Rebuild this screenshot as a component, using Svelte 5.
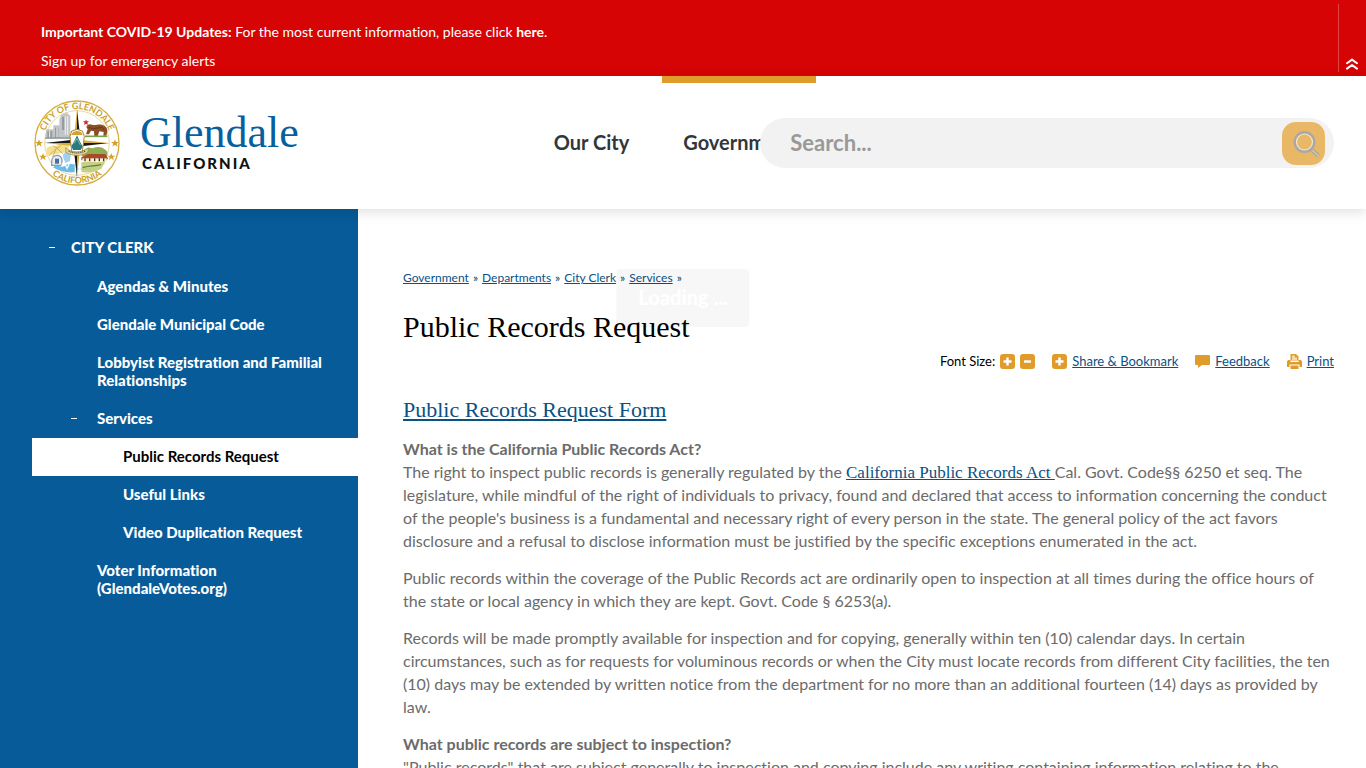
<script>
  const crumbs = ['Government', 'Departments', 'City Clerk', 'Services'];
  const sideItems = [
    { label: 'CITY CLERK', level: 0, open: true },
    { label: 'Agendas & Minutes', level: 1 },
    { label: 'Glendale Municipal Code', level: 1 },
    { label: 'Lobbyist Registration and Familial Relationships', level: 1 },
    { label: 'Services', level: 1, open: true },
    { label: 'Public Records Request', level: 2, active: true },
    { label: 'Useful Links', level: 2 },
    { label: 'Video Duplication Request', level: 2 },
    { label: 'Voter Information (GlendaleVotes.org)', level: 1 }
  ];
  let query = $state('');
</script>

{#snippet sign(minus)}
  <svg class="sign" viewBox="0 0 15 15" aria-hidden="true">
    <rect width="15" height="15" rx="3" fill="#df9c2b" />
    <path d={minus ? 'M4 7.5h7' : 'M3.5 7.5h8M7.5 3.5v8'} stroke="#fff" stroke-width="2.4" />
  </svg>
{/snippet}

<div class="page">
  <aside class="alert">
    <div class="alert-text">
      <p><strong>Important COVID-19 Updates:</strong> For the most current information, please click <a href="#covid"><strong>here</strong></a>.</p>
      <p><a href="#alerts">Sign up for emergency alerts</a></p>
    </div>
    <button class="collapse" aria-label="Collapse alert">
      <svg viewBox="0 0 12 12" aria-hidden="true"><path d="M1 5.2 6 1.6l5 3.6M1 10.6 6 7l5 3.6" fill="none" stroke="#fff" stroke-width="2" stroke-linecap="round" stroke-linejoin="round" /></svg>
    </button>
  </aside>

  <header>
    <a class="brand" href="#home" aria-label="Glendale California">
      <svg class="seal" viewBox="0 0 258 258" aria-hidden="true">
        <defs>
          <path id="arc-top" d="M27 129a102 102 0 0 1 204 0" />
          <path id="arc-bottom" d="M8 129a121 121 0 0 0 242 0" />
        </defs>
        <circle cx="129" cy="129" r="126" fill="#fff" stroke="#d6ae3c" stroke-width="4" />
        <circle cx="129" cy="129" r="97" fill="none" stroke="#dfc165" stroke-width="2" />
        <g class="seal-text">
          <text><textPath href="#arc-top" startOffset="50%" text-anchor="middle">CITY OF GLENDALE</textPath></text>
          <text><textPath href="#arc-bottom" startOffset="50%" text-anchor="middle">CALIFORNIA</textPath></text>
        </g>
        <g fill="#d1a02a">
          <path id="st" d="m15 118 3 8h9l-7 5 3 9-8-6-8 6 3-9-7-5h9z" />
          <use href="#st" x="12" y="41" /><use href="#st" x="228" /><use href="#st" x="217" y="41" />
        </g>
        <path d="M36 88h22V76h18V56l8-14 14-4 11 9v55l9 14H34z" fill="#c3c6c8" />
        <path d="M40 93h15v19H40zM63 83h10v30H63zM84 50h7v40h-7z" fill="#969b9e" />
        <path d="M47 93v19M69 83v30M94 49v55M101 49v55" stroke="#f1f1f1" stroke-width="3" />
        <path d="M34 114h79" stroke="#777e80" stroke-width="3" />
        <path d="m156 58 2 6h7l-5 4 2 7-6-4-6 4 2-7-5-4h7z" fill="#d8232f" />
        <path d="M157 81c4-10 12-9 17-7 11 4 18-3 29 0 13 3 17 10 17 20l-3 13h-9l1-11-13-2-5 15h-10l-1-15-9-2-6 11h-9l5-15z" fill="#8c4f25" />
        <path d="m164 82 14 4 26-4 8 9" fill="none" stroke="#643819" stroke-width="3" />
        <path d="M153 109h67" stroke="#77a343" stroke-width="5" />
        <path d="M38 145c14-13 22 1 31-9s15 1 36-5l-2 24-29 6-37 4z" fill="#f4df8f" />
        <path d="M44 168 68 144M56 170l12-26M69 144l17 17M69 144l-13-7M69 144l12-6" stroke="#d4b355" stroke-width="3" />
        <path d="M53 185c0-24 31-25 31-3v14H53z" fill="#e8edf0" stroke="#879dac" stroke-width="4" />
        <path d="M63 176h12v15H63z" fill="#466ea0" />
        <path d="m86 165 12-13 13 7-3 24-16 7z" fill="#9ed1ed" />
        <path d="M57 202c16-12 25 5 39-6s18 1 26-5v26c-24 2-47-3-65-15z" fill="#69bce5" />
        <path d="m83 199 7-15 9 22 8-18" fill="none" stroke="#fff" stroke-width="4" />
        <path d="M145 154c10-9 18-14 31-9 17-7 30-4 44 10v14h-77z" fill="#8fae51" />
        <path d="m142 172 20-10h52l8 13-4 6h-76z" fill="#a64a27" />
        <path d="M145 175h73v8h-73z" fill="#faf0d6" />
        <path d="M153 175v9m14-9v9m15-9v9m14-9v9m13-9v9" stroke="#4d2920" stroke-width="4" />
        <path d="M142 187c25-6 44 2 73-3l-13 22c-23 13-42 13-60 10z" fill="#c9cf85" />
        <path d="M146 203c20-8 36-3 55-9" stroke="#52833d" stroke-width="4" fill="none" />
        <path d="m129 28 10 86-10 15zM129 234l-10-90 10-15zM32 129l85-10 12 10zM226 129l-85 10-12-10z" fill="#171713" />
        <path d="m129 28-9 86 9 15zM129 234l9-90-9-15zM32 129l85 9 12-9zM226 129l-85-9-12 9z" fill="#d3ad3f" />
        <path d="m108 109 5-16 16-5 16 5 6 16-6 45-16 9-16-9z" fill="#fff" stroke="#ab852c" stroke-width="3" />
        <path d="m112 105 5-9 12-4 12 4 5 9z" fill="#d0a332" />
        <path d="m112 139 11-20 6-13 8 17 9 17-6 10h-23z" fill="#267b80" />
        <path d="m120 131 9-16 10 20" stroke="#81b9a6" fill="none" stroke-width="3" />
        <path d="M95 143c13 16 52 17 68 0l-2 14c-20 13-46 12-65 0z" fill="#e9d7a1" stroke="#9b833f" stroke-width="2" />
        <path d="M104 153c16 8 34 8 50 0" stroke="#383525" stroke-width="4" stroke-dasharray="3 3" fill="none" />
        <path d="M90 207h80" stroke="#68aed1" stroke-width="2" stroke-dasharray="3 4" />
      </svg>
      <span class="wordmark"><span class="city">Glendale</span><span class="state">CALIFORNIA</span></span>
    </a>
    <nav>
      <a href="#city">Our City</a>
      <a href="#government" class="current">Government</a>
    </nav>
    <form class="search" onsubmit={(e) => e.preventDefault()}>
      <input type="text" aria-label="Search" placeholder="Search..." bind:value={query} />
      <button aria-label="Submit search">
        <svg viewBox="0 0 43 43" aria-hidden="true">
          <path d="m29 27 7.500 7" stroke="#aaa8a5" stroke-width="4" />
          <path d="m29 27 7.500 7" stroke="#dfc59c" stroke-width="1.4" />
          <circle cx="22.500" cy="20" r="9.500" fill="none" stroke="#aaa8a5" stroke-width="3" />
          <circle cx="22.500" cy="20" r="8" fill="none" stroke="#f6e5c8" stroke-width="1.2" />
        </svg>
      </button>
    </form>
  </header>

  <div class="body">
    <nav class="side" aria-label="Section">
      {#each sideItems as item}
        <a href="#section" class="level-{item.level}" class:active={item.active}>
          {#if item.open}<span class="dash"></span>{/if}{item.label}
        </a>
      {/each}
    </nav>

    <main>
      <div class="crumbs">
        {#each crumbs as crumb}<a href="#crumb">{crumb}</a><span>»</span>{/each}
      </div>
      <h1>Public Records Request</h1>
      <div class="tools">
        <span class="tool">Font Size:
          <button aria-label="Increase font size">{@render sign(false)}</button>
          <button aria-label="Decrease font size">{@render sign(true)}</button>
        </span>
        <a class="tool" href="#share">{@render sign(false)}<span>Share &amp; Bookmark</span></a>
        <a class="tool" href="#feedback">
          <svg class="sign" viewBox="0 0 15 15" aria-hidden="true"><path d="M1 1h13q1 0 1 1v8q0 1-1 1H7l-4 3v-3H1q-1 0-1-1V2q0-1 1-1z" fill="#df9c2b" /></svg>
          <span>Feedback</span>
        </a>
        <a class="tool" href="#print">
          <svg class="sign" viewBox="0 0 15 15" aria-hidden="true">
            <path d="M3.500 0H9l2.500 2.500V6.500h-8z" fill="#df9c2b" />
            <path d="M5 1.500h3v2h2V6H5z" fill="#f3d9a8" />
            <path d="M1 6h2.500v2h8V6H14l1 1.500V13h-2.500v-2.500h-10V13H0V7.500z" fill="#df9c2b" />
            <path d="M3.500 11.500h8V15h-8z" fill="#df9c2b" />
          </svg>
          <span>Print</span>
        </a>
      </div>

      <h2><a href="#form">Public Records Request Form</a></h2>
      <h3>What is the California Public Records Act?</h3>
      <p>The right to inspect public records is generally regulated by the <a class="act" href="#act">California Public Records Act{' '}</a>Cal. Govt. Code§§ 6250 et seq. The legislature, while mindful of the right of individuals to privacy, found and declared that access to information concerning the conduct of the people's business is a fundamental and necessary right of every person in the state. The general policy of the act favors disclosure and a refusal to disclose information must be justified by the specific exceptions enumerated in the act.</p>
      <p>Public records within the coverage of the Public Records act are ordinarily open to inspection at all times during the office hours of the state or local agency in which they are kept. Govt. Code § 6253(a).</p>
      <p>Records will be made promptly available for inspection and for copying, generally within ten (10) calendar days. In certain circumstances, such as for requests for voluminous records or when the City must locate records from different City facilities, the ten (10) days may be extended by written notice from the department for no more than an additional fourteen (14) days as provided by law.</p>
      <h3>What public records are subject to inspection?</h3>
      <p>"Public records" that are subject generally to inspection and copying include any writing containing information relating to the</p>
    </main>
  </div>

  <div class="loading" role="status">Loading ...</div>
</div>

<style>
  :global(body) { margin: 0; background: #fff; }
  .page { position: relative; display: flex; flex-direction: column; height: 100vh; overflow: hidden; font-family: Lato, "Liberation Sans", sans-serif; font-variant-ligatures: none; color: #000; }
  p, h1, h2, h3 { margin: 0; }
  button { padding: 0; border: 0; background: none; cursor: pointer; }
  svg { display: block; }

  .alert { flex: none; display: flex; justify-content: space-between; background: #d60404; color: #fff; font-size: 14px; line-height: 18px; }
  .alert-text { display: grid; gap: 11px; padding: 23px 16px 6px 41px; }
  .alert a { color: inherit; text-decoration: none; }
  .collapse { display: flex; align-items: flex-end; margin: 4px 8px 4px 0; padding: 0 0 2px 7px; border-left: 1px solid #e34444; }
  .collapse svg { width: 12px; height: 12px; }

  header { position: relative; z-index: 1; flex: none; display: flex; height: 133px; background: #fff; box-shadow: 0 3px 12px rgba(0, 0, 0, 0.13); }
  .brand { flex: 0 0 39%; box-sizing: border-box; display: flex; align-items: center; gap: 20px; padding-left: 34px; text-decoration: none; }
  .seal { width: 86px; height: 86px; }
  .seal-text { font: 700 27px Lato, sans-serif; fill: #c9a02f; }
  .wordmark { display: flex; flex-direction: column; padding-bottom: 4px; }
  .city { font: 44px/44px "Liberation Serif", serif; color: #085f9e; }
  .state { padding-left: 2px; font-size: 15px; font-weight: 900; line-height: 16px; letter-spacing: 2px; color: #111; }
  header nav { display: flex; gap: 12px; font-size: 20px; font-weight: 700; }
  header nav a { display: flex; align-items: center; padding: 0 21px 2px; border-top: 7px solid transparent; border-bottom: 7px solid transparent; color: #333739; text-decoration: none; }
  header nav a.current { border-top-color: #df9c2b; }
  .search { position: absolute; top: 42px; right: 32px; width: 42%; height: 50px; box-sizing: border-box; display: flex; align-items: center; padding: 0 9px 0 30px; border-radius: 25px; background: #f2f2f2; }
  .search input { flex: 1; min-width: 0; padding: 0 0 2px; border: 0; outline: 0; background: none; font: 700 22px Lato, sans-serif; }
  .search input::placeholder { color: #999; opacity: 1; }
  .search button { width: 43px; height: 43px; border-radius: 14px; background: #e8b866; }

  .body { flex: 1; min-height: 0; display: grid; grid-template-columns: 358px 1fr; }
  .side { display: flex; flex-direction: column; padding: 20px 0 0 32px; background: #065b98; }
  .side a { position: relative; padding: 9px 28px 11px 65px; color: #fff; font-size: 15px; font-weight: 900; line-height: 18px; text-decoration: none; }
  .side .level-0 { padding-left: 39px; padding-bottom: 12px; }
  .side .level-2 { padding-left: 91px; }
  .side .active { background: #fff; color: #000; font-weight: 700; }
  .dash { position: absolute; top: 18px; left: 39px; width: 6px; height: 1px; background: #fff; }
  .level-0 .dash { left: 17px; }
  .side a:last-child { padding-right: 100px; }

  main { min-width: 0; padding: 60px 32px 0 45px; }
  main a { color: #0b5184; }
  .crumbs { display: flex; font-size: 12px; line-height: 18px; color: #0b3f66; }
  .crumbs span { padding: 0 4px; }
  h1 { margin-top: 21px; font: 30px/38px "Liberation Serif", serif; }
  .tools { display: flex; justify-content: flex-end; gap: 17px; margin-top: 6px; font-size: 13px; line-height: 18px; }
  .tool { display: flex; align-items: center; gap: 5px; text-decoration: none; }
  .tool span { text-decoration: underline; }
  .sign { width: 15px; height: 15px; }
  h2 { margin-top: 26px; font: 22px/28px "Liberation Serif", serif; }
  h3 { margin-top: 13px; font-size: 16px; font-weight: 700; line-height: 23px; color: #6b6b6b; }
  main p { font-size: 16px; line-height: 23px; color: #6b6b6b; }
  main p + p, main p + h3 { margin-top: 14px; }
  .act { font: 17px/16px "Liberation Serif", serif; }

  .loading { position: absolute; z-index: 2; top: 269px; left: 50%; transform: translateX(-50%); padding: 16px 22px 18px; border-radius: 4px; background: rgba(0, 0, 0, 0.03); color: #fff; font-size: 20px; font-weight: 900; line-height: 24px; white-space: nowrap; }
</style>
